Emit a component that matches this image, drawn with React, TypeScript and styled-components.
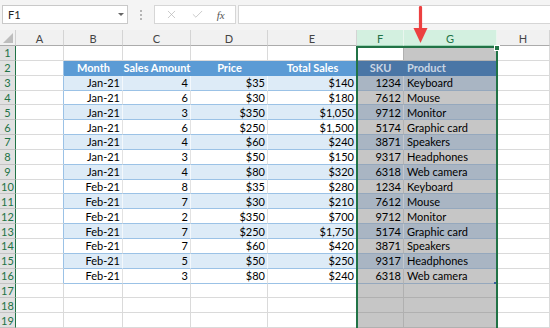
import React from "react";
import styled, { createGlobalStyle } from "styled-components";
import { X, Check } from "lucide-react";

const GlobalStyle = createGlobalStyle`
  html, body { margin: 0; padding: 0; background: #fff; overflow: hidden; }
  body { font-family: Lato, "Liberation Sans", sans-serif; }
`;

const Page = styled.div`
  position: relative;
  width: 550px;
  height: 328px;
  display: flex;
  flex-direction: column;
  overflow: hidden;
  background: #fff;
`;

const Toolbar = styled.div`
  height: 30px;
  flex: none;
  display: flex;
  align-items: flex-start;
  padding: 5px 0 0 2px;
  box-sizing: border-box;
  background: #f4f4f4;
`;

const NameBox = styled.div`
  width: 126px;
  height: 19px;
  box-sizing: border-box;
  border: 1px solid #c9c9c9;
  background: #fff;
  display: flex;
  align-items: center;
  justify-content: space-between;
  padding: 0 3px 0 5px;
  font-size: 11px;
  color: #222;
`;

const Caret = styled.span`
  width: 0;
  height: 0;
  border-left: 3px solid transparent;
  border-right: 3px solid transparent;
  border-top: 3px solid #666;
`;

const Grip = styled.div`
  width: 26px;
  height: 19px;
  display: flex;
  flex-direction: column;
  align-items: center;
  justify-content: center;
  gap: 2px;
  & > i {
    width: 2px;
    height: 2px;
    background: #b5b5b5;
  }
`;

const FxBox = styled.div`
  width: 82px;
  height: 19px;
  box-sizing: border-box;
  border: 1px solid #d6d6d6;
  background: #fff;
  display: flex;
  align-items: center;
  justify-content: space-around;
  padding: 0 4px;
  color: #b5b5b5;
`;

const FxLabel = styled.span`
  font-size: 11px;
  color: #555;
  font-family: "Liberation Serif", serif;
  font-style: italic;
`;

const FormulaInput = styled.div`
  flex: 1;
  height: 19px;
  margin-left: 2px;
  box-sizing: border-box;
  border: 1px solid #d6d6d6;
  border-right: none;
  background: #fff;
`;

const Sheet = styled.div`
  position: relative;
  flex: 1;
  display: grid;
  grid-template-columns: 16px 48px 59px 68px 77px 89px 47px 93px 53px;
  grid-template-rows: 16px repeat(19, 14.85px);
  font-size: 11px;
  color: #000;
`;

const Corner = styled.div`
  position: relative;
  background: #f1f1f1;
  border-bottom: 1px solid #ababab;
  border-right: 1px solid #d0d0d0;
  box-sizing: border-box;
  &::after {
    content: "";
    position: absolute;
    right: 2px;
    bottom: 2px;
    width: 0;
    height: 0;
    border-left: 10px solid transparent;
    border-bottom: 10px solid #bdbdbd;
  }
`;

const ColHead = styled.div<{ $sel?: boolean }>`
  box-sizing: border-box;
  display: flex;
  align-items: center;
  justify-content: center;
  padding-top: 1px;
  background: ${(p) => (p.$sel ? "#d3f0e0" : "#f1f1f1")};
  color: ${(p) => (p.$sel ? "#217346" : "#444")};
  border-right: 1px solid ${(p) => (p.$sel ? "#e9f6ee" : "#d4d4d4")};
  border-bottom: 1px solid ${(p) => (p.$sel ? "#9fd5b7" : "#ababab")};
  font-size: 11px;
`;

const RowHead = styled.div`
  box-sizing: border-box;
  display: flex;
  align-items: center;
  justify-content: center;
  background: #e1e1e1;
  color: #217346;
  border-right: 1px solid #217346;
  border-bottom: 1px solid #c4c4c4;
  font-size: 11px;
`;

const Cell = styled.div<{
  $bg: string;
  $h: string;
  $v: string;
  $align: "left" | "right" | "center";
  $bold?: boolean;
  $color?: string;
  $handle?: boolean;
}>`
  position: relative;
  box-sizing: border-box;
  display: flex;
  align-items: center;
  justify-content: ${(p) =>
    p.$align === "right" ? "flex-end" : p.$align === "center" ? "center" : "flex-start"};
  padding: 0 2px 0 3px;
  background: ${(p) => p.$bg};
  border-right: 1px solid ${(p) => p.$v};
  border-bottom: 1px solid ${(p) => p.$h};
  font-weight: ${(p) => (p.$bold ? 700 : 400)};
  color: ${(p) => p.$color || "#000"};
  white-space: nowrap;
  overflow: visible;
  &::after {
    content: "";
    display: ${(p) => (p.$handle ? "block" : "none")};
    position: absolute;
    right: 0;
    bottom: -1px;
    width: 2px;
    height: 2px;
    background: #3a5fa0;
  }
`;

const Selection = styled.div`
  position: absolute;
  grid-column: 7 / 9;
  grid-row: 2 / -1;
  inset: 0 -1px -4px -1px;
  border: 2px solid #217346;
  border-bottom: none;
  pointer-events: none;
`;

const FillHandle = styled.div`
  position: absolute;
  right: -4px;
  top: -3px;
  width: 4px;
  height: 4px;
  background: #217346;
  border: 1px solid #fff;
`;

const Arrow = styled.svg`
  position: absolute;
  left: 413px;
  top: 6px;
`;

const COLS = ["A", "B", "C", "D", "E", "F", "G", "H"];

const HEADERS = ["Month", "Sales Amount", "Price", "Total Sales", "SKU", "Product"];

const DATA: string[][] = [
  ["Jan-21", "4", "$35", "$140", "1234", "Keyboard"],
  ["Jan-21", "6", "$30", "$180", "7612", "Mouse"],
  ["Jan-21", "3", "$350", "$1,050", "9712", "Monitor"],
  ["Jan-21", "6", "$250", "$1,500", "5174", "Graphic card"],
  ["Jan-21", "4", "$60", "$240", "3871", "Speakers"],
  ["Jan-21", "3", "$50", "$150", "9317", "Headphones"],
  ["Jan-21", "4", "$80", "$320", "6318", "Web camera"],
  ["Feb-21", "8", "$35", "$280", "1234", "Keyboard"],
  ["Feb-21", "7", "$30", "$210", "7612", "Mouse"],
  ["Feb-21", "2", "$350", "$700", "9712", "Monitor"],
  ["Feb-21", "7", "$250", "$1,750", "5174", "Graphic card"],
  ["Feb-21", "7", "$60", "$420", "3871", "Speakers"],
  ["Feb-21", "5", "$50", "$250", "9317", "Headphones"],
  ["Feb-21", "3", "$80", "$240", "6318", "Web camera"],
];

function cellProps(r: number, c: number) {
  const inTable = r >= 2 && r <= 16 && c >= 1 && c <= 6;
  const sel = c === 5 || c === 6;
  const active = r === 1 && c === 5;
  let text = "";
  let align: "left" | "right" | "center" = c === 6 ? "left" : "right";
  let bold = false;
  let color: string | undefined;
  let bg = "#fff";
  let h = "#dadada";
  let v = "#dadada";
  if (!inTable) {
    bg = sel && !active ? "#c6c6c6" : "#fff";
    if (sel) {
      h = "#b0b0b0";
      v = "#b0b0b0";
    }
    if (c === 0 && r >= 2 && r <= 16) v = "#9bc2e6";
  } else if (r === 2) {
    text = HEADERS[c - 1];
    align = c === 6 ? "left" : "center";
    bold = true;
    bg = sel ? "#4a76a6" : "#5b9bd5";
    color = sel ? "#c9d5e3" : "#fff";
    h = bg;
    v = bg;
  } else {
    text = DATA[r - 3][c - 1];
    const band = r % 2 === 1;
    if (band) {
      bg = sel ? "#a9b5c3" : "#ddebf7";
      h = sel ? "#95a8bd" : "#9bc2e6";
      v = sel ? "#c2c7cd" : "#f3f8fc";
    } else {
      bg = sel ? "#c6c6c6" : "#fff";
      h = sel ? "#95a8bd" : "#9bc2e6";
      v = sel ? "#b3b3b3" : "#e2e2e2";
    }
  }
  return { text, align, bold, color, bg, h, v, handle: r === 16 && c === 6 };
}

export default function App() {
  const rows = Array.from({ length: 19 }, (_, i) => i + 1);
  return (
    <Page>
      <GlobalStyle />
      <Toolbar>
        <NameBox>
          <span>F1</span>
          <Caret />
        </NameBox>
        <Grip>
          <i />
          <i />
          <i />
        </Grip>
        <FxBox>
          <X size={13} strokeWidth={1.3} />
          <Check size={13} strokeWidth={1.3} />
          <FxLabel>fx</FxLabel>
        </FxBox>
        <FormulaInput />
      </Toolbar>
      <Sheet>
        <Corner />
        {COLS.map((c, i) => (
          <ColHead key={c} $sel={i === 5 || i === 6}>
            {c}
          </ColHead>
        ))}
        {rows.map((r) => (
          <React.Fragment key={r}>
            <RowHead>{r}</RowHead>
            {COLS.map((col, c) => {
              const p = cellProps(r, c);
              return (
                <Cell
                  key={col}
                  $bg={p.bg}
                  $h={p.h}
                  $v={p.v}
                  $align={p.align}
                  $bold={p.bold}
                  $color={p.color}
                  $handle={p.handle}
                >
                  {p.text}
                </Cell>
              );
            })}
          </React.Fragment>
        ))}
        <Selection>
          <FillHandle />
        </Selection>
      </Sheet>
      <Arrow width="15" height="38" viewBox="0 0 15 38">
        <line x1="7.5" y1="1.5" x2="7.5" y2="24" stroke="#ec4040" strokeWidth="3.2" strokeLinecap="round" />
        <polygon points="0.5,22 14.5,22 7.5,37" fill="#ec4040" />
      </Arrow>
    </Page>
  );
}
